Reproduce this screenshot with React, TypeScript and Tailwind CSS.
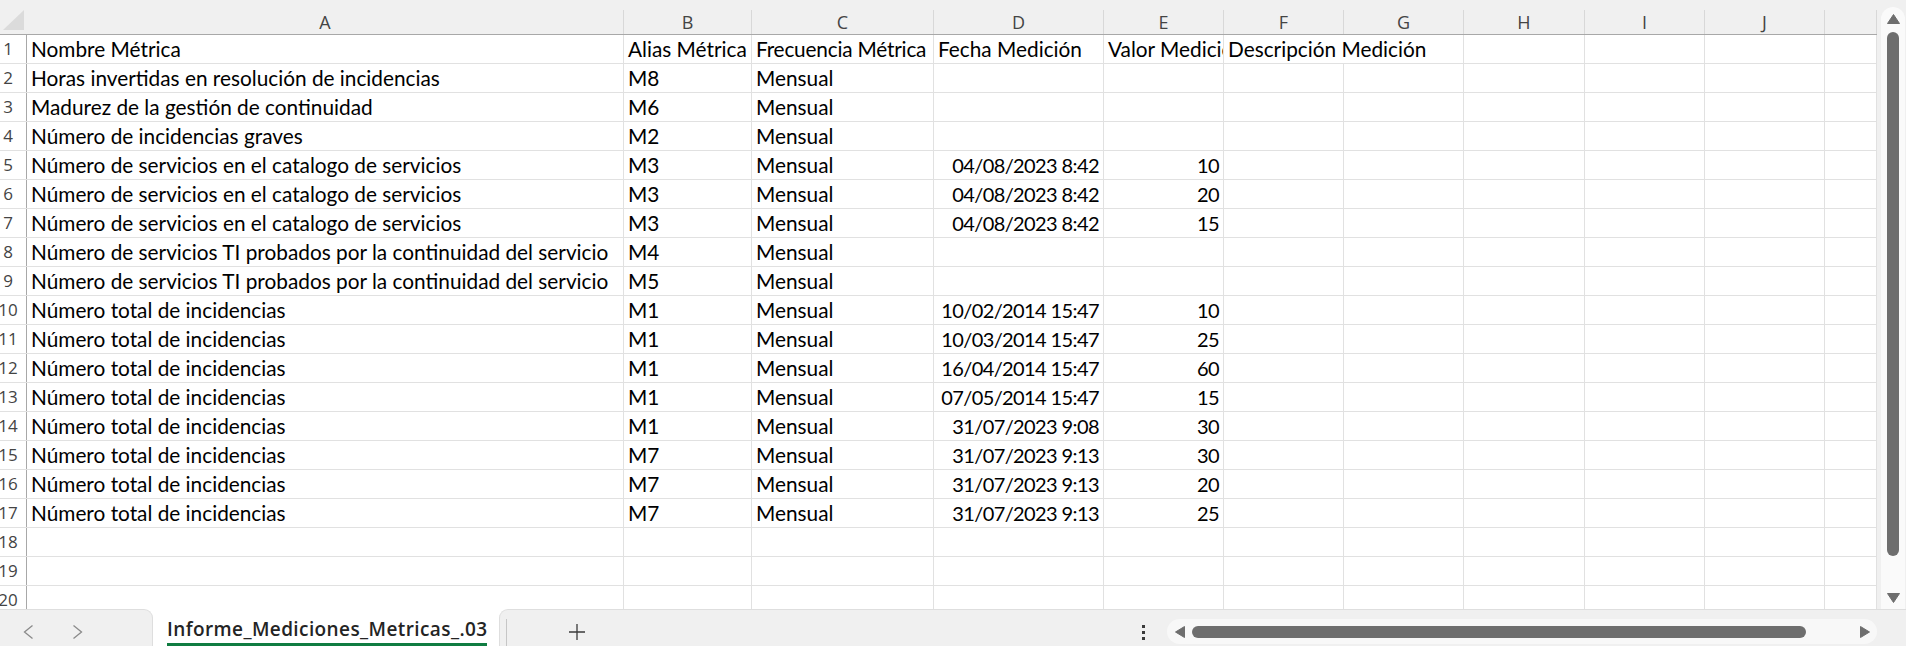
import clsx from "clsx";

// column widths A..K (K is cut off by the scrollbar)
const COL_W = [
  "w-[597px]",
  "w-[128px]",
  "w-[182px]",
  "w-[170px]",
  "w-[120px]",
  "w-[120px]",
  "w-[120px]",
  "w-[121px]",
  "w-[120px]",
  "w-[120px]",
  "w-[52px]",
];
const LETTERS = ["A", "B", "C", "D", "E", "F", "G", "H", "I", "J", ""];

const SERV = "Número de servicios en el catalogo de servicios";
const SERV_TI = "Número de servicios TI probados por la continuidad del servicio";
const TOTAL = "Número total de incidencias";

// A, B, C, D (date), E (value)
const ROWS: string[][] = [
  ["Horas invertidas en resolución de incidencias", "M8", "Mensual", "", ""],
  ["Madurez de la gestión de continuidad", "M6", "Mensual", "", ""],
  ["Número de incidencias graves", "M2", "Mensual", "", ""],
  [SERV, "M3", "Mensual", "04/08/2023 8:42", "10"],
  [SERV, "M3", "Mensual", "04/08/2023 8:42", "20"],
  [SERV, "M3", "Mensual", "04/08/2023 8:42", "15"],
  [SERV_TI, "M4", "Mensual", "", ""],
  [SERV_TI, "M5", "Mensual", "", ""],
  [TOTAL, "M1", "Mensual", "10/02/2014 15:47", "10"],
  [TOTAL, "M1", "Mensual", "10/03/2014 15:47", "25"],
  [TOTAL, "M1", "Mensual", "16/04/2014 15:47", "60"],
  [TOTAL, "M1", "Mensual", "07/05/2014 15:47", "15"],
  [TOTAL, "M1", "Mensual", "31/07/2023 9:08", "30"],
  [TOTAL, "M7", "Mensual", "31/07/2023 9:13", "30"],
  [TOTAL, "M7", "Mensual", "31/07/2023 9:13", "20"],
  [TOTAL, "M7", "Mensual", "31/07/2023 9:13", "25"],
  ["", "", "", "", ""],
  ["", "", "", "", ""],
  ["", "", "", "", ""],
];

const HEADER_ROW = [
  "Nombre Métrica",
  "Alias Métrica",
  "Frecuencia Métrica",
  "Fecha Medición",
  "Valor Medición",
  "Descripción Medición",
];

function RowNumber({ n }: { n: number }) {
  return (
    <div className="flex h-full w-[27px] shrink-0 items-end overflow-hidden border-r border-[#a8a8a8] pb-[4px]">
      <div className="flex w-[16px] justify-center whitespace-nowrap text-[17px] leading-[20px] text-[#444] [font-family:'Open_Sans',sans-serif]">
        {n}
      </div>
    </div>
  );
}

function Cell({
  i,
  text,
  num,
  spill,
  tight,
}: {
  i: number;
  text?: string;
  num?: boolean;
  spill?: boolean;
  tight?: boolean;
}) {
  return (
    <div
      className={clsx(
        "flex h-full shrink-0 items-end whitespace-nowrap border-r px-[4px] pb-[4px] leading-[20px] text-black [font-family:Lato,sans-serif]",
        COL_W[i],
        // Lato digits run wider than the sheet's font, so numbers get tightened
        num ? "justify-end text-[20px] tracking-[-0.6px]" : "text-[20.8px]",
        tight && "pr-[2px] tracking-[-0.2px]",
        // text only runs over into the next column when that one is empty
        spill ? "relative z-10 overflow-visible border-transparent" : "overflow-hidden border-[#e1e1e1]"
      )}
    >
      {text}
    </div>
  );
}

function Grid() {
  return (
    <div className="flex min-w-0 flex-1 flex-col overflow-hidden bg-white">
      {/* column letters */}
      <div className="flex h-[35px] shrink-0 border-b border-[#a8a8a8] bg-[#f0f0f0]">
        <div className="w-[27px] shrink-0 pl-[3px] pt-[10px]">
          <svg width="21" height="20" viewBox="0 0 21 20">
            <polygon points="21,0 21,20 0,20" fill="#dbdbdb" />
          </svg>
        </div>
        {LETTERS.map((l, i) => (
          <div key={i} className={clsx("shrink-0 pt-[10px]", COL_W[i])}>
            <div className="flex h-full items-center justify-center border-r border-[#d8d8d8] text-[18px] text-[#444] [font-family:'Open_Sans',sans-serif]">
              {l}
            </div>
          </div>
        ))}
      </div>

      {/* row 1: titles */}
      <div className="flex h-[29px] shrink-0 border-b border-[#e1e1e1]">
        <RowNumber n={1} />
        <Cell i={0} text={HEADER_ROW[0]} />
        <Cell i={1} text={HEADER_ROW[1]} />
        <Cell i={2} text={HEADER_ROW[2]} tight />
        <Cell i={3} text={HEADER_ROW[3]} />
        <Cell i={4} text={HEADER_ROW[4]} />
        <Cell i={5} text={HEADER_ROW[5]} spill />
        {[6, 7, 8, 9, 10].map((i) => (
          <Cell key={i} i={i} />
        ))}
      </div>

      {ROWS.map((r, ri) => (
        <div key={ri} className="flex h-[29px] shrink-0 border-b border-[#e1e1e1]">
          <RowNumber n={ri + 2} />
          <Cell i={0} text={r[0]} />
          <Cell i={1} text={r[1]} />
          <Cell i={2} text={r[2]} />
          <Cell i={3} text={r[3]} num />
          <Cell i={4} text={r[4]} num />
          {[5, 6, 7, 8, 9, 10].map((i) => (
            <Cell key={i} i={i} />
          ))}
        </div>
      ))}
    </div>
  );
}

function VScroll() {
  return (
    <div className="flex h-full w-[29px] shrink-0 bg-[#f0f0f0] pl-[4px] pr-[1px] pt-[7px]">
      <div className="flex h-full w-full flex-col items-center rounded-t-full bg-[#fafafa]">
        <svg className="mt-[7px]" width="13" height="10" viewBox="0 0 13 10">
          <polygon points="6.5,0.5 12.5,9.5 0.5,9.5" fill="#6e6e6e" stroke="#6e6e6e" strokeLinejoin="round" />
        </svg>
        <div className="mt-[8px] h-[524px] w-[12px] rounded-full bg-[#6e6e6e]" />
        <svg className="mb-[6px] mt-auto" width="13" height="10" viewBox="0 0 13 10">
          <polygon points="0.5,0.5 12.5,0.5 6.5,9.5" fill="#6e6e6e" stroke="#6e6e6e" strokeLinejoin="round" />
        </svg>
      </div>
    </div>
  );
}

function Chevron({ dir }: { dir: "l" | "r" }) {
  return (
    <svg width="11" height="14" viewBox="0 0 11 14">
      <polyline
        points={dir === "l" ? "9.5,0.5 1.5,7 9.5,13.5" : "1.5,0.5 9.5,7 1.5,13.5"}
        fill="none"
        stroke="#8a8a8a"
        strokeWidth="1.3"
      />
    </svg>
  );
}

function SheetBar() {
  return (
    <div className="flex h-[37px] shrink-0 bg-white">
      {/* sheet navigation */}
      <div className="flex w-[153px] shrink-0 items-start gap-[38px] rounded-tr-[9px] border-r border-t border-[#dedede] bg-[#f0f0f0] pl-[23px] pt-[15px]">
        <Chevron dir="l" />
        <Chevron dir="r" />
      </div>

      {/* active sheet tab */}
      <div className="flex w-[346px] shrink-0 flex-col pl-[14px] pt-[10px]">
        <span className="whitespace-nowrap text-[19px] font-semibold leading-[20px] tracking-[0.4px] text-[#242424] [font-family:'Open_Sans',sans-serif]">
          Informe_Mediciones_Metricas_.03
        </span>
        <div className="mt-auto h-[3px] w-[320px] bg-[#107c41]" />
      </div>

      {/* rest of the bar */}
      <div className="flex min-w-0 flex-1 items-start rounded-tl-[9px] border-l border-t border-[#dedede] bg-[#f0f0f0]">
        <div className="ml-[6px] mt-[9px] h-[28px] w-px bg-[#c6c6c6]" />
        <svg className="ml-[61px] mt-[13px]" width="18" height="18" viewBox="0 0 18 18">
          <path d="M9 1v16M1 9h16" stroke="#3a3a3a" strokeWidth="1.3" fill="none" />
        </svg>
        <div className="ml-[556px] mt-[15px] flex flex-col gap-[3px]">
          <div className="h-[3px] w-[3px] bg-[#3a3a3a]" />
          <div className="h-[3px] w-[3px] bg-[#3a3a3a]" />
          <div className="h-[3px] w-[3px] bg-[#3a3a3a]" />
        </div>
        <div className="ml-[22px] mt-[9px] flex h-[25px] w-[710px] items-center rounded-full bg-[#f8f8f8]">
          <svg className="ml-[8px]" width="10" height="12" viewBox="0 0 10 12">
            <polygon points="0.5,6 9.5,0.5 9.5,11.5" fill="#6e6e6e" stroke="#6e6e6e" strokeLinejoin="round" />
          </svg>
          <div className="ml-[7px] h-[12px] w-[614px] rounded-full bg-[#6e6e6e]" />
          <svg className="ml-[54px]" width="10" height="12" viewBox="0 0 10 12">
            <polygon points="0.5,0.5 9.5,6 0.5,11.5" fill="#6e6e6e" stroke="#6e6e6e" strokeLinejoin="round" />
          </svg>
        </div>
      </div>
    </div>
  );
}

export default function App() {
  return (
    <div className="flex h-[646px] w-[1906px] flex-col overflow-hidden bg-white">
      <div className="flex h-[609px] shrink-0">
        <Grid />
        <VScroll />
      </div>
      <SheetBar />
    </div>
  );
}
